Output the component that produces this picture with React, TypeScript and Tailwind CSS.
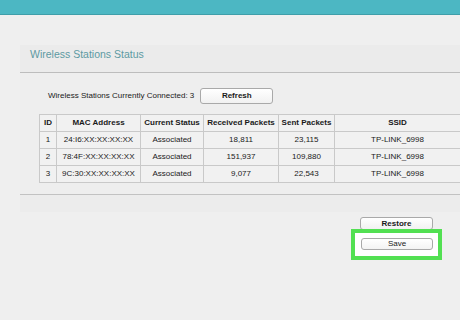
import React from "react";

const rows = [
  ["1", "24:I6:XX:XX:XX:XX", "Associated", "18,811", "23,115", "TP-LINK_6998"],
  ["2", "78:4F:XX:XX:XX:XX", "Associated", "151,937", "109,880", "TP-LINK_6998"],
  ["3", "9C:30:XX:XX:XX:XX", "Associated", "9,077", "22,543", "TP-LINK_6998"],
];

const widths = ["w-[17px]", "w-[84px]", "w-[63px]", "w-[75px]", "w-[56px]", "w-[126px]"];
const headers = ["ID", "MAC Address", "Current Status", "Received Packets", "Sent Packets", "SSID"];

export default function App() {
  return (
    <div
      className="relative w-[460px] h-[320px] overflow-hidden bg-[#efefef] text-[#1a1a1a]"
      style={{ fontFamily: '"Liberation Sans", Arial, sans-serif' }}
    >
      <div className="h-[15px] bg-[#4cb7c3] border-b border-[#3f9ea9]" />
      <div className="ml-[20px] mt-[30px] w-[460px]">
        <div className="h-[28px] bg-[#ebebeb] border-b border-[#bdbdbd] flex items-start pt-[3px] pl-[10px] text-[10.5px] leading-[13px] text-[#5d9aa2]">
          Wireless Stations Status
        </div>
        <div className="bg-[#eeeeee]">
          <div className="pt-[15px] flex items-center h-[31px] pl-[28px]">
            <span className="text-[8px]">Wireless Stations Currently Connected: 3</span>
            <button className="ml-[6px] w-[73px] h-[16px] rounded-[3px] border border-[#a9a9a9] bg-gradient-to-b from-white to-[#f1f1f1] text-[8px] font-bold flex items-center justify-center">
              Refresh
            </button>
          </div>
          <div className="pl-[19px] pt-[10px] pb-[11px]">
            <table className="border-collapse text-[8px] text-center bg-[#f1f1f1]">
              <thead>
                <tr className="h-[17px]">
                  {headers.map((h, i) => (
                    <th key={h} className={`${widths[i]} border border-[#c9c9c9] font-bold p-0 whitespace-nowrap`}>
                      {h}
                    </th>
                  ))}
                </tr>
              </thead>
              <tbody>
                {rows.map((r) => (
                  <tr key={r[0]} className="h-[17px]">
                    {r.map((c, i) => (
                      <td key={i} className={`${widths[i]} border border-[#c9c9c9] p-0 whitespace-nowrap`}>
                        {c}
                      </td>
                    ))}
                  </tr>
                ))}
              </tbody>
            </table>
          </div>
        </div>
        <div className="h-[18px] border-t border-[#c2c2c2] bg-[#ececec]" />
      </div>
      <div className="flex flex-col items-end pr-[27px] pt-[5px] gap-[8px]">
        <button className="w-[73px] h-[13px] rounded-[3px] border border-[#a9a9a9] bg-gradient-to-b from-white to-[#f1f1f1] text-[8px] font-bold flex items-center justify-center leading-none">
          Restore
        </button>
        <div className="relative">
          <div className="absolute left-[-10px] right-[-9px] top-[-9px] bottom-[-10px] border-[4px] border-[#52e052] bg-white" />
          <button className="relative w-[72px] h-[12px] rounded-[3px] border border-[#a9a9a9] bg-gradient-to-b from-white to-[#f3f3f3] text-[8px] flex items-center justify-center leading-none">
            Save
          </button>
        </div>
      </div>
    </div>
  );
}
